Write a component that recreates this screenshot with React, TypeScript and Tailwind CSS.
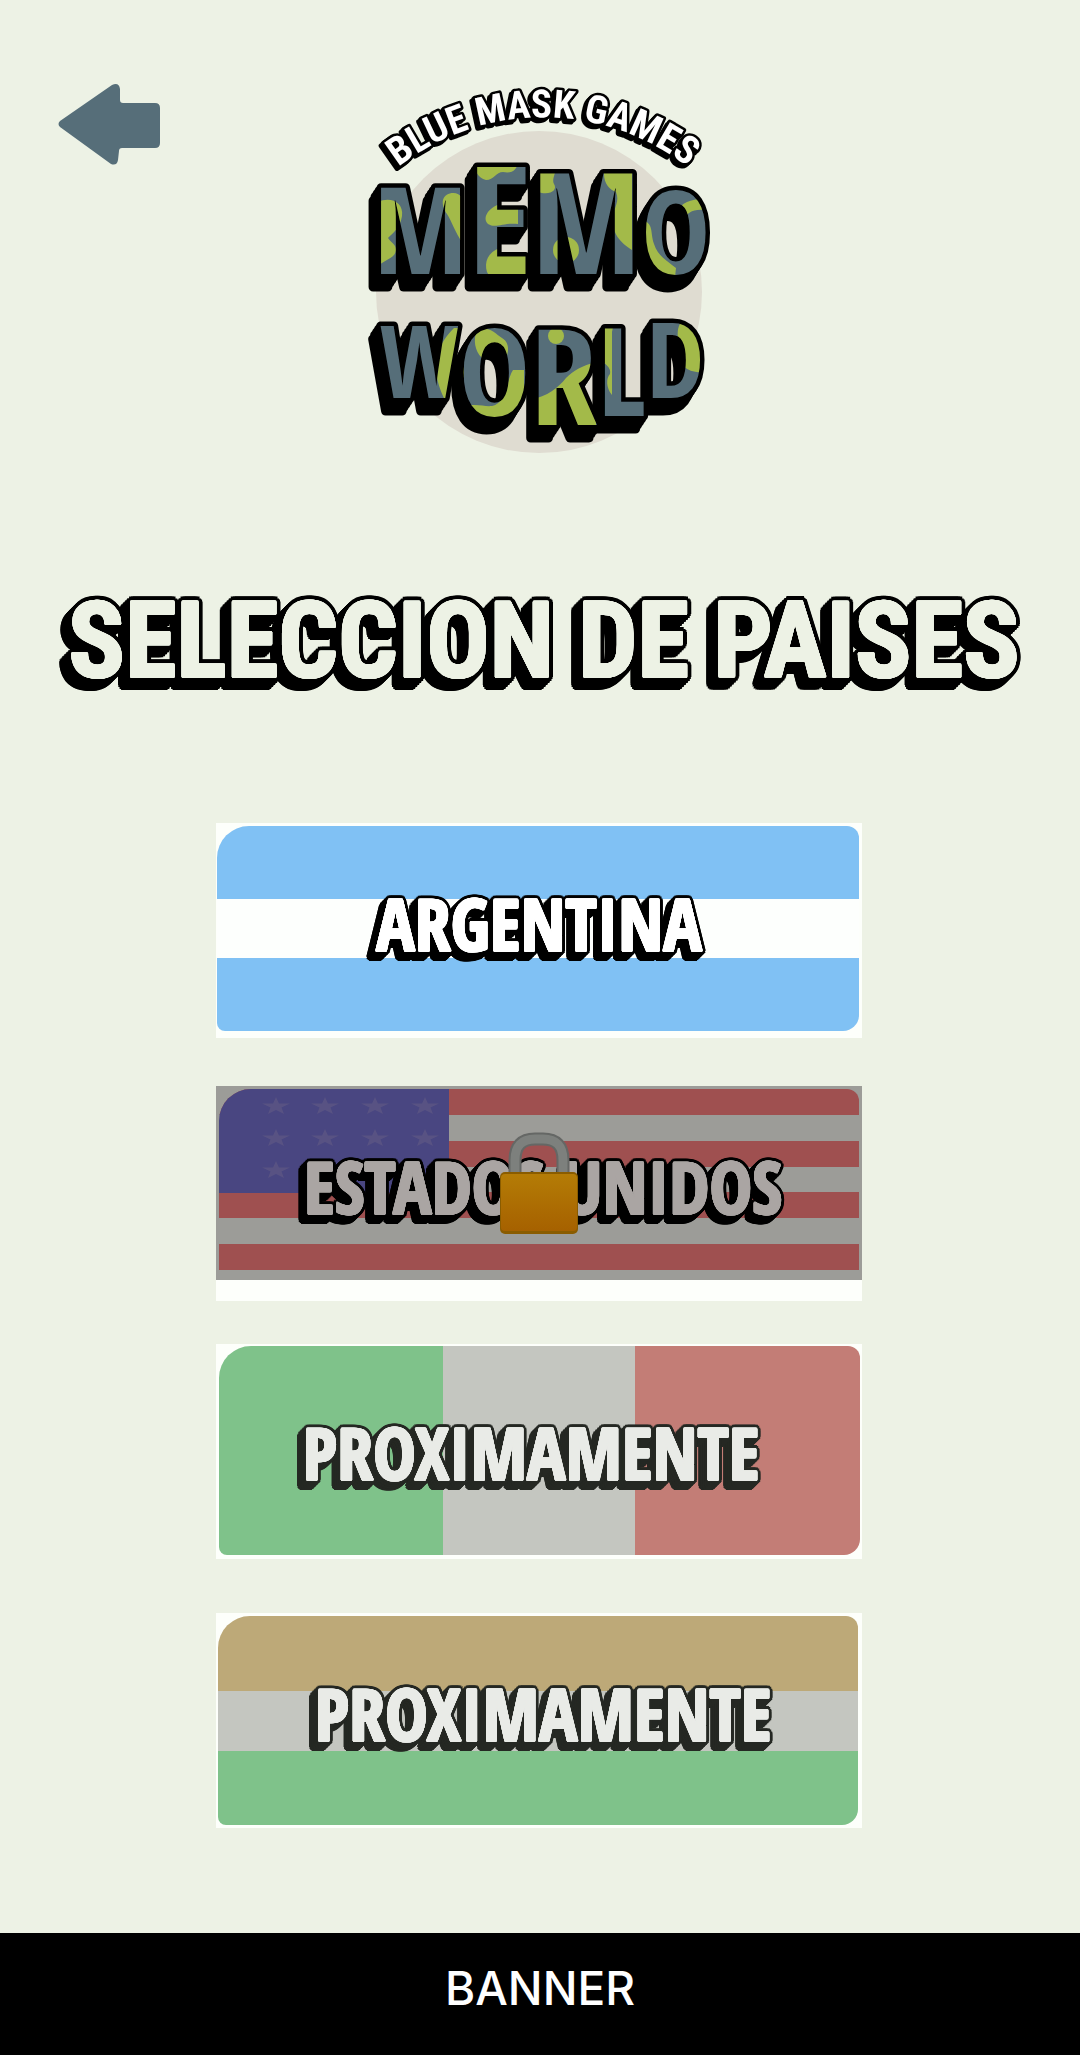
import type { ReactNode } from "react";

const DISPLAY = "font-['Roboto_Condensed','Roboto',sans-serif]";
const NARROW = "font-['Open_Sans_Condensed','Roboto_Condensed',sans-serif]";

function ring(radius: number, dx: number, dy: number, color: string): string[] {
  const out: string[] = [];
  for (let i = 0; i < 16; i++) {
    const a = (i * Math.PI) / 8;
    out.push(
      `${(dx + Math.cos(a) * radius).toFixed(1)}px ${(dy + Math.sin(a) * radius).toFixed(1)}px 0 ${color}`
    );
  }
  return out;
}

/* Rounded face, dark outline and an extrusion that falls to the lower left. */
function comicShadow(face: string, ink: string, fat: number, outline: number, depth: number) {
  const layers = ring(fat, 0, 0, face);
  for (let d = 0; d <= depth; d += 2) {
    layers.push(...ring(fat + outline, -d, d, ink));
  }
  return layers.join(", ");
}

type CardProps = {
  label: string;
  children: ReactNode;
  face: string;
  ink: string;
  textClass?: string;
  disabled?: boolean;
};

function CountryCard({ label, children, face, ink, textClass = "", disabled }: CardProps) {
  return (
    <button
      type="button"
      disabled={disabled}
      className="grid h-[215px] w-full grid-cols-1 grid-rows-1 bg-[#fdfffb]"
    >
      {children}
      <span
        className={`relative [grid-area:1/1] self-center justify-self-center text-[72px] leading-none font-bold whitespace-nowrap ${NARROW} ${textClass}`}
        style={{ color: face, textShadow: comicShadow(face, ink, 1, 3, 6) }}
      >
        {label}
      </span>
    </button>
  );
}

function Star() {
  return (
    <svg viewBox="0 0 28 18" className="h-[18px] w-7" aria-hidden="true">
      <path d="M14 0 17 6.5H28L19.5 10.5 22 17 14 13 6 17 8.500 10.500 0 6.500H11Z" fill="#7a7088" fillOpacity=".3" />
    </svg>
  );
}

function Padlock() {
  return (
    <svg viewBox="0 0 80 104" className="h-[104px] w-20" role="img" aria-label="Bloqueado">
      <defs>
        <linearGradient id="lockBody" x1="0" y1="0" x2="0" y2="1">
          <stop offset="0" stopColor="#b47c06" />
          <stop offset="1" stopColor="#a66100" />
        </linearGradient>
      </defs>
      <path d="M16 46V28Q16 7 36 7H44Q64 7 64 28V46" fill="none" stroke="#656765" strokeWidth="13" />
      <path d="M16 46V28Q16 7 36 7H44Q64 7 64 28V46" fill="none" stroke="#7d807d" strokeWidth="9" />
      <rect x="1" y="40" width="78" height="62" rx="5" fill="#8a5c00" />
      <rect x="2" y="42" width="76" height="57" rx="4" fill="url(#lockBody)" />
    </svg>
  );
}

type Glyph = { ch: string; size: number; dy: number };

const MEMO: Glyph[] = [
  { ch: "M", size: 120, dy: 0 },
  { ch: "E", size: 150, dy: 0 },
  { ch: "M", size: 140, dy: 0 },
  { ch: "O", size: 116, dy: 0 },
];

const WORLD: Glyph[] = [
  { ch: "W", size: 100, dy: 0 },
  { ch: "O", size: 120, dy: 18 },
  { ch: "R", size: 134, dy: 9 },
  { ch: "L", size: 122, dy: -9 },
  { ch: "D", size: 104, dy: -18 },
];

function Word({ glyphs, y }: { glyphs: Glyph[]; y: number }) {
  return (
    <text x="182" y={y} textAnchor="middle">
      {glyphs.map((g, i) => (
        <tspan key={i} fontSize={g.size} dy={g.dy}>
          {g.ch}
        </tspan>
      ))}
    </text>
  );
}

function Logo() {
  return (
    <svg viewBox="0 0 360 400" className="h-[400px] w-[360px] overflow-visible" role="img" aria-label="Blue Mask Games Memo World">
      <defs>
        <pattern id="earth" patternUnits="userSpaceOnUse" x="0" y="0" width="360" height="400">
          <rect width="360" height="400" fill="#566e79" />
          <g fill="#a3ba4a">
            <path d="M18 132C30 126 44 132 42 146C40 158 34 162 28 168C32 174 36 174 36 180C35 188 28 188 18 196Z" />
            <path d="M83 130C85 122 98 120 102 128V172C95 162 92 152 87 144C84 140 82 134 83 130Z" />
            <path d="M112 90H158C158 100 152 104 143 102C136 102 134 110 126 110C118 108 114 100 112 90Z" />
            <path d="M140 134C128 138 122 148 128 154C136 159 143 152 158 154V136Z" />
            <path d="M140 178C128 182 124 192 127 202C130 208 136 212 146 212H168V184H140Z" />
            <path d="M178 94H198C194 106 192 110 194 114C198 120 190 126 178 122Z" />
            <path d="M244 90H272V180C260 172 252 164 253 148C254 136 260 132 256 122C250 120 244 114 244 104Z" />
            <circle cx="206" cy="180" r="13" />
            <path d="M284 150C294 156 290 162 294 174C298 186 306 190 316 198L314 216H280Z" />
            <path d="M316 142C322 132 330 130 344 128V140C332 139 328 143 322 150Z" />
            <path d="M94 258C78 274 74 290 76 302C78 316 82 324 86 332L104 336V258Z" />
            <path d="M116 262C126 254 134 262 142 268C152 274 148 288 142 294L133 286V276L122 288C114 280 114 270 116 262Z" />
            <path d="M106 336C122 332 132 342 141 330C148 318 148 308 153 300H164V366H106Z" />
            <circle cx="196" cy="266" r="8" />
            <path d="M170 330C188 326 198 318 206 308C214 300 222 296 236 292V370H170Z" />
            <path d="M238 250C246 242 256 248 252 262V325C246 318 246 308 250 304C252 296 242 294 238 284Z" />
            <path d="M328 246C312 256 320 268 318 284C320 294 326 304 346 302V246Z" />
          </g>
        </pattern>
        <filter id="extrude" x="-20%" y="-20%" width="140%" height="140%">
          <feOffset in="SourceAlpha" dx="-2" dy="3" result="a" />
          <feOffset in="SourceAlpha" dx="-4" dy="6" result="b" />
          <feOffset in="SourceAlpha" dx="-6" dy="9" result="c" />
          <feOffset in="SourceAlpha" dx="-8" dy="13" result="d" />
          <feMerge>
            <feMergeNode in="d" />
            <feMergeNode in="c" />
            <feMergeNode in="b" />
            <feMergeNode in="a" />
            <feMergeNode in="SourceGraphic" />
          </feMerge>
        </filter>
        <filter id="extrudeSmall" x="-20%" y="-20%" width="140%" height="140%">
          <feOffset in="SourceAlpha" dx="-1" dy="1" result="a" />
          <feOffset in="SourceAlpha" dx="-3" dy="3" result="b" />
          <feMerge>
            <feMergeNode in="b" />
            <feMergeNode in="a" />
            <feMergeNode in="SourceGraphic" />
          </feMerge>
        </filter>
        <path id="arc" d="M32 102A236 236 0 0 1 334 102" />
      </defs>
      <ellipse cx="179" cy="222" rx="163" ry="161" fill="#dfdcd1" />
      <g
        className={`font-bold ${NARROW}`}
        fill="url(#earth)"
        stroke="#000"
        strokeWidth="9"
        strokeLinejoin="round"
        paintOrder="stroke"
        filter="url(#extrude)"
      >
        <Word glyphs={MEMO} y={204} />
        <Word glyphs={WORLD} y={328} />
      </g>
      <text
        className={`font-bold ${DISPLAY}`}
        fontSize="39"
        fill="#fff"
        stroke="#000"
        strokeWidth="5"
        strokeLinejoin="round"
        paintOrder="stroke"
        filter="url(#extrudeSmall)"
      >
        <textPath href="#arc" startOffset="50%" textAnchor="middle">
          BLUE MASK GAMES
        </textPath>
      </text>
    </svg>
  );
}

const STRIPES = [0, 1, 2, 3, 4, 5, 6];
const INNER = "[grid-area:1/1] overflow-hidden rounded-tl-[32px] rounded-tr-xl rounded-br-2xl rounded-bl-lg";

export default function App() {
  return (
    <div className="flex min-h-screen flex-col bg-[#edf2e5]">
      <header className="grid grid-cols-[1fr_auto_1fr] items-start pt-[70px]">
        <button type="button" aria-label="Volver" className="mt-3 ml-[58px] w-[102px]">
          <svg viewBox="0 0 102 84" className="h-[84px] w-[102px]" aria-hidden="true">
            <path
              d="M2 39 54 3Q61 0 62 7V18Q62 21 65 21H97Q102 21 102 26V61Q102 66 97 66H64Q61 66 61 69L60 78Q59 84 53 82L2 45Q-1 42 2 39Z"
              fill="#566e79"
            />
          </svg>
        </button>
        <Logo />
      </header>

      <h1
        className={`mt-[120px] pl-2 text-center text-[105px] leading-[104px] font-bold whitespace-nowrap text-[#edf2e5] ${DISPLAY}`}
        style={{ textShadow: comicShadow("#edf2e5", "#000", 1, 4, 8) }}
      >
        SELECCION DE PAISES
      </h1>

      <main className="mx-auto mt-[129px] mb-[105px] flex w-3/5 flex-col pr-0.5">
        <CountryCard label="ARGENTINA" face="#ffffff" ink="#000000" textClass="mb-4">
          <span className={`${INNER} mt-[3px] mr-[3px] mb-[7px] ml-px flex flex-col`}>
            <span className="flex-[73] bg-[#80c1f4]" />
            <span className="flex-[59] bg-[#fdfffd]" />
            <span className="flex-[73] bg-[#80c1f4]" />
          </span>
        </CountryCard>

        <div className="mt-12">
          <CountryCard label="ESTADOS UNIDOS" face="#aaa5a3" ink="#000000" textClass="mb-4 ml-2">
            <span className="mb-[21px] flex bg-[#9c9c98] px-[3px] pt-[3px] pb-[10px] [grid-area:1/1]">
              <span className="grid flex-1 overflow-hidden rounded-tl-[32px] rounded-tr-xl">
                <span className="flex flex-col [grid-area:1/1]">
                  {STRIPES.map((i) => (
                    <span key={i} className={`flex-1 ${i % 2 ? "bg-[#9c9c98]" : "bg-[#9f5050]"}`} />
                  ))}
                </span>
                <span className="grid h-[104px] w-[36%] grid-cols-4 content-start justify-items-center gap-y-[14px] bg-[#494681] pt-2 pl-8 [grid-area:1/1]">
                  {[...STRIPES, 7, 8].map((i) => (
                    <Star key={i} />
                  ))}
                </span>
              </span>
            </span>
            <span className="z-10 self-start justify-self-center pt-[46px] [grid-area:1/1]">
              <Padlock />
            </span>
          </CountryCard>
        </div>

        <div className="mt-[43px]">
          <CountryCard label="PROXIMAMENTE" face="#e9ebe7" ink="#252823" textClass="mr-4" disabled>
            <span className={`${INNER} mt-[2px] mr-[2px] mb-[4px] ml-[3px] flex`}>
              <span className="flex-[224] bg-[#7fc28a]" />
              <span className="flex-[192] bg-[#c4c6c0]" />
              <span className="flex-[225] bg-[#c37d76]" />
            </span>
          </CountryCard>
        </div>

        <div className="mt-[54px]">
          <CountryCard label="PROXIMAMENTE" face="#e9ebe7" ink="#252823" textClass="mb-4 ml-2" disabled>
            <span className={`${INNER} mt-[3px] mr-1 mb-[3px] ml-[2px] flex flex-col`}>
              <span className="flex-[75] bg-[#bda978]" />
              <span className="flex-[60] bg-[#c4c6c0]" />
              <span className="flex-[74] bg-[#7fc28a]" />
            </span>
          </CountryCard>
        </div>
      </main>

      <footer className="mt-auto flex h-[122px] items-center justify-center bg-black pb-3 font-['Inter',sans-serif] text-[46px] leading-none font-medium text-white">
        BANNER
      </footer>
    </div>
  );
}
